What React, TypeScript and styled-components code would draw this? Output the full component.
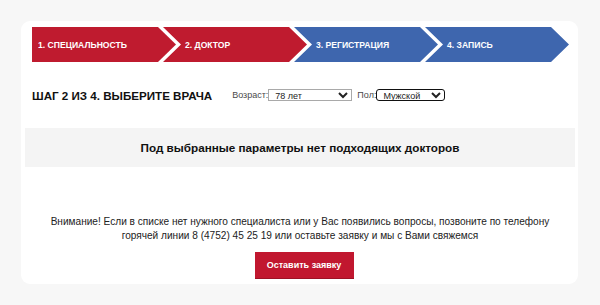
import styled, { createGlobalStyle } from 'styled-components'

const GlobalStyle = createGlobalStyle`
  html, body {
    margin: 0;
    padding: 0;
    background: #f7f7f7;
    font-family: "Liberation Sans", Arial, sans-serif;
  }
`

const Page = styled.div`
  width: 600px;
  height: 305px;
  padding-top: 21px;
  box-sizing: border-box;
  overflow: hidden;
`

const Card = styled.div`
  width: 557px;
  margin-left: 21px;
  background: #fff;
  border-radius: 9px;
  padding: 6px 3px 5px 4px;
  box-sizing: border-box;
  display: flex;
  flex-direction: column;
`

const Steps = styled.div`
  display: flex;
  margin: 0 0 0 7px;
  height: 35px;
`

const Step = styled.div<{ $color: string; $first?: boolean }>`
  flex: 0 0 144px;
  box-sizing: border-box;
  display: flex;
  align-items: center;
  background: ${({ $color }) => $color};
  color: #fff;
  font-size: 8.6px;
  font-weight: bold;
  text-transform: uppercase;
  white-space: nowrap;
  padding-left: ${({ $first }) => ($first ? '6px' : '22px')};
  margin-left: ${({ $first }) => ($first ? '0' : '-13px')};
  clip-path: ${({ $first }) =>
    $first
      ? 'polygon(0 0, calc(100% - 18px) 0, 100% 50%, calc(100% - 18px) 100%, 0 100%)'
      : 'polygon(0 0, calc(100% - 18px) 0, 100% 50%, calc(100% - 18px) 100%, 0 100%, 18px 50%)'};
`

const HeadRow = styled.div`
  display: flex;
  align-items: center;
  height: 22px;
  margin: 22px 0 22px 7px;
`

const Heading = styled.h2`
  margin: 0 20px 0 0;
  font-size: 11.6px;
  font-weight: bold;
  color: #111;
`

const Field = styled.label`
  display: flex;
  align-items: center;
  font-size: 9px;
  color: #4a4a4a;
  margin-right: 5px;
`

const Select = styled.select<{ $w: number; $dark?: boolean }>`
  width: ${({ $w }) => $w}px;
  height: 12px;
  padding: 0 0 0 2px;
  margin: 0;
  font-family: "Liberation Sans", Arial, sans-serif;
  font-size: 9px;
  line-height: 10px;
  color: #222;
  background: #fff;
  border: 1px solid ${({ $dark }) => ($dark ? '#111' : '#a9a9a9')};
  border-radius: ${({ $dark }) => ($dark ? '3px' : '0')};
  box-sizing: border-box;
  outline: none;
`

const Empty = styled.div`
  height: 39px;
  background: #f4f4f4;
  display: flex;
  align-items: center;
  justify-content: center;
  font-size: 11.7px;
  font-weight: bold;
  color: #111;
`

const Notice = styled.p`
  margin: 48px auto 0;
  width: 510px;
  text-align: center;
  font-size: 10.1px;
  line-height: 14px;
  color: #222;
`

const Button = styled.button`
  align-self: center;
  margin: 9px 0 0 8px;
  width: 99px;
  height: 27px;
  border: none;
  border-bottom: 1px solid #9d1225;
  background: #c1172f;
  color: #fff;
  font-family: "Liberation Sans", Arial, sans-serif;
  font-size: 9px;
  font-weight: bold;
  cursor: pointer;
`

const RED = '#bf1b2f'
const BLUE = '#3e66ae'

export default function App() {
  return (
    <Page>
      <GlobalStyle />
      <Card>
        <Steps>
          <Step $color={RED} $first>1. Специальность</Step>
          <Step $color={RED}>2. Доктор</Step>
          <Step $color={BLUE}>3. Регистрация</Step>
          <Step $color={BLUE}>4. Запись</Step>
        </Steps>
        <HeadRow>
          <Heading>ШАГ 2 ИЗ 4. ВЫБЕРИТЕ ВРАЧА</Heading>
          <Field>
            Возраст:
            <Select $w={84} defaultValue="78">
              <option value="78">78 лет</option>
            </Select>
          </Field>
          <Field>
            Пол:
            <Select $w={69} $dark defaultValue="m">
              <option value="m">Мужской</option>
              <option value="f">Женский</option>
            </Select>
          </Field>
        </HeadRow>
        <Empty>Под выбранные параметры нет подходящих докторов</Empty>
        <Notice>
          Внимание! Если в списке нет нужного специалиста или у Вас появились вопросы, позвоните по телефону
          горячей линии 8 (4752) 45 25 19 или оставьте заявку и мы с Вами свяжемся
        </Notice>
        <Button>Оставить заявку</Button>
      </Card>
    </Page>
  )
}
